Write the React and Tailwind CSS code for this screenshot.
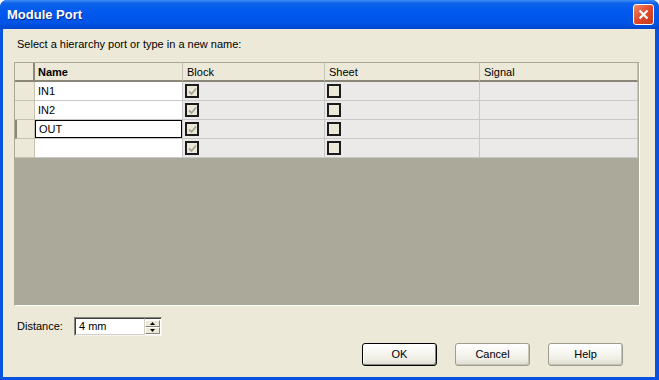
import React from "react";

const rows = [
  { name: "IN1" },
  { name: "IN2" },
  { name: "OUT", editing: true },
  { name: "" },
];

function CheckBox({ checked, disabled }) {
  return (
    <div className="flex h-[14px] w-[14px] items-center justify-center border-2 border-[#1c1c1c] bg-[#ece9d8]">
      {checked && (
        <svg width="9" height="9" viewBox="0 0 9 9">
          <path
            d="M1 4.5 L3.5 7 L8 1.5"
            fill="none"
            stroke={disabled ? "#a6a59c" : "#21a121"}
            strokeWidth="1.8"
          />
        </svg>
      )}
    </div>
  );
}

function XpButton({ label, isDefault }) {
  return (
    <button
      className={
        "flex h-[23px] w-[75px] items-center justify-center rounded-[3px] bg-[linear-gradient(to_bottom,#ffffff,#f0efe6_70%,#dcdad0)] text-[11px] text-black " +
        (isDefault
          ? "border border-[#000000] shadow-[inset_-1px_-1px_0_#8a8878,inset_1px_1px_0_#ffffff]"
          : "border border-[#9e9c8e] shadow-[inset_-1px_-1px_0_#c7c5b2]")
      }
    >
      {label}
    </button>
  );
}

export default function App() {
  return (
    <div className="flex h-[380px] w-[659px] flex-col overflow-hidden rounded-t-[7px] bg-[#0753e0] font-['Liberation_Sans',Arial,sans-serif] text-[11px] text-black">
      {/* title bar */}
      <div className="flex h-[29px] shrink-0 items-center justify-between bg-[linear-gradient(to_bottom,#3d8ef7_0%,#0b61ea_12%,#0058ee_45%,#0054e6_80%,#0046cc_100%)] pl-[7px] pr-[5px]">
        <span className="text-[13px] font-bold text-white [text-shadow:1px_1px_0_#0a2a8a]">
          Module Port
        </span>
        <div className="flex h-[21px] w-[21px] items-center justify-center rounded-[3px] border border-white bg-[linear-gradient(135deg,#f08a6a,#e0492a_50%,#c2391c)]">
          <svg width="11" height="11" viewBox="0 0 11 11">
            <path d="M1.5 1.5 L9.5 9.5 M9.5 1.5 L1.5 9.5" stroke="#ffffff" strokeWidth="2.2" />
          </svg>
        </div>
      </div>

      {/* body */}
      <div className="mb-[3px] ml-[3px] mr-[4px] flex flex-1 flex-col bg-[#ece9d8] pl-[11px] pt-[9px]">
        <div className="ml-[3px] h-[13px] leading-[13px]">
          Select a hierarchy port or type in a new name:
        </div>

        {/* grid */}
        <div className="mt-[11px] flex h-[244px] w-[626px] flex-col border border-b-white border-l-[#aca899] border-r-white border-t-[#aca899] bg-[#aba999]">
          {/* header */}
          <div className="flex h-[19px] shrink-0">
            <div className="w-[20px] shrink-0 border-b-2 border-r-2 border-b-[#8a8778] border-r-[#8a8778] bg-[#ece9d8]" />
            <div className="w-[148px] shrink-0 border-b-2 border-r border-b-[#8a8778] border-r-[#c5c2b2] bg-[#ece9d8] pl-[3px] font-bold leading-[18px]">
              Name
            </div>
            <div className="w-[142px] shrink-0 border-b-2 border-r border-b-[#8a8778] border-r-[#c5c2b2] bg-[#ece9d8] pl-[4px] leading-[18px]">
              Block
            </div>
            <div className="w-[155px] shrink-0 border-b-2 border-r border-b-[#8a8778] border-r-[#c5c2b2] bg-[#ece9d8] pl-[4px] leading-[18px]">
              Sheet
            </div>
            <div className="w-[158px] shrink-0 border-b-2 border-r border-b-[#8a8778] border-r-[#c5c2b2] bg-[#ece9d8] pl-[4px] leading-[18px]">
              Signal
            </div>
          </div>

          {rows.map((r, i) => (
            <div key={i} className="flex h-[19px] shrink-0">
              <div
                className={
                  "w-[20px] shrink-0 border-b border-r border-b-[#c5c2b2] border-r-[#c5c2b2] bg-[#ece9d8] " +
                  (r.editing ? "border-l-2 border-l-[#8a8778]" : "")
                }
              />
              <div className="w-[148px] shrink-0 border-b border-r border-b-[#c8c8c8] border-r-[#c8c8c8] bg-white">
                {r.editing ? (
                  <div className="h-full w-[147px] border border-black pl-[3px] leading-[16px]">
                    {r.name}
                  </div>
                ) : (
                  <div className="pl-[3px] leading-[18px]">{r.name}</div>
                )}
              </div>
              <div className="flex w-[142px] shrink-0 items-center border-b border-r border-b-[#c8c8c8] border-r-[#c8c8c8] bg-[#ebeae8] pl-[2px]">
                <CheckBox checked disabled />
              </div>
              <div className="flex w-[155px] shrink-0 items-center border-b border-r border-b-[#c8c8c8] border-r-[#c8c8c8] bg-[#ebeae8] pl-[2px]">
                <CheckBox />
              </div>
              <div className="w-[158px] shrink-0 border-b border-r border-b-[#c8c8c8] border-r-[#c8c8c8] bg-[#ebeae8]" />
            </div>
          ))}
        </div>

        {/* distance */}
        <div className="mt-[11px] flex h-[19px] items-center">
          <div className="ml-[3px] w-[57px]">Distance:</div>
          <div className="flex h-[19px] w-[88px] items-center border border-b-[#f4f3ee] border-l-[#8a8778] border-r-[#f4f3ee] border-t-[#8a8778] bg-white">
            <div className="flex h-full flex-1 items-center border border-b-[#d4d0c8] border-l-[#404040] border-r-[#d4d0c8] border-t-[#404040] pl-[3px]">
              4 mm
            </div>
            <div className="flex h-full w-[16px] flex-col border-t border-t-[#404040] py-[1px] pr-[1px]">
              <div className="flex flex-1 items-center justify-center border border-b-[#8a8778] border-l-white border-r-[#8a8778] border-t-white bg-[#ece9d8]">
                <svg width="5" height="3" viewBox="0 0 5 3">
                  <path d="M2.5 0 L5 3 L0 3 Z" fill="#000" />
                </svg>
              </div>
              <div className="flex flex-1 items-center justify-center border border-b-[#8a8778] border-l-white border-r-[#8a8778] border-t-white bg-[#ece9d8]">
                <svg width="5" height="3" viewBox="0 0 5 3">
                  <path d="M0 0 L5 0 L2.5 3 Z" fill="#000" />
                </svg>
              </div>
            </div>
          </div>
        </div>

        {/* buttons */}
        <div className="mr-[32px] mt-[7px] flex justify-end gap-[18px]">
          <XpButton label="OK" isDefault />
          <XpButton label="Cancel" />
          <XpButton label="Help" />
        </div>
      </div>
    </div>
  );
}
